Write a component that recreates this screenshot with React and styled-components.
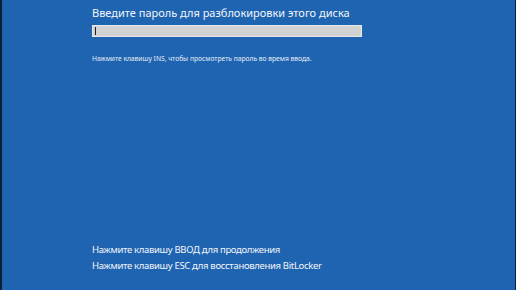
import React from 'react'
import styled, { createGlobalStyle } from 'styled-components'

const GlobalStyle = createGlobalStyle`
  html, body {
    margin: 0;
    padding: 0;
    background: #000;
  }
`

const Screen = styled.div`
  width: 516px;
  height: 290px;
  box-sizing: border-box;
  border-left: 2px solid #0b1f3a;
  border-right: 1px solid #0b1f3a;
  background: #1f64b0;
  color: #ffffff;
  font-family: 'Noto Sans', 'Open Sans', sans-serif;
  display: flex;
  flex-direction: column;
  justify-content: space-between;
  padding: 6px 0 18px 90px;
`

const Prompt = styled.section`
  display: flex;
  flex-direction: column;
`

const Title = styled.div`
  font-size: 11px;
  line-height: 14px;
  color: #f2f6fb;
`

const PasswordBox = styled.div`
  margin-top: 5px;
  width: 270px;
  height: 12px;
  box-sizing: border-box;
  background: #d2d2d2;
  border: 1px solid #e8e8e8;
  display: flex;
  align-items: center;
  padding-left: 2px;
`

const Caret = styled.span`
  width: 1px;
  height: 8px;
  background: #202020;
`

const Hint = styled.div`
  margin-top: 17px;
  font-size: 6.7px;
  line-height: 9px;
  color: #e6eef8;
`

const Footer = styled.section`
  display: flex;
  flex-direction: column;
  gap: 3px;
`

const KeyLine = styled.div`
  font-size: 9.5px;
  letter-spacing: -0.32px;
  line-height: 13px;
  color: #f2f6fb;
`

export default function App() {
  return (
    <>
      <GlobalStyle />
      <Screen>
        <Prompt>
          <Title>Введите пароль для разблокировки этого диска</Title>
          <PasswordBox>
            <Caret />
          </PasswordBox>
          <Hint>Нажмите клавишу INS, чтобы просмотреть пароль во время ввода.</Hint>
        </Prompt>
        <Footer>
          <KeyLine>Нажмите клавишу ВВОД для продолжения</KeyLine>
          <KeyLine>Нажмите клавишу ESC для восстановления BitLocker</KeyLine>
        </Footer>
      </Screen>
    </>
  )
}
